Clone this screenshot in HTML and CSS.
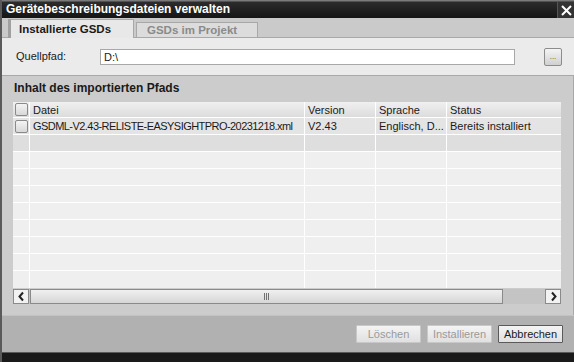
FILE: index.html
```html
<!DOCTYPE html>
<html>
<head>
  <title>Gerätebeschreibungsdateien verwalten</title>
  <link rel="stylesheet" href="styles.css">
</head>
<body>
  <div class="window">
    <div class="titlebar">
      <span class="title">Gerätebeschreibungsdateien verwalten</span>
      <span class="close">
        <svg width="13" height="13" viewBox="0 0 13 13"><path d="M2 2 L11 11 M11 2 L2 11" stroke="#fff" stroke-width="2"/></svg>
      </span>
    </div>

    <div class="tabs">
      <div class="tab active">Installierte GSDs</div>
      <div class="tab">GSDs im Projekt</div>
    </div>

    <div class="source">
      <label class="source-label">Quellpfad:</label>
      <div class="path-input">D:\</div>
      <button class="browse-btn">...</button>
    </div>

    <div class="content">
      <h2 class="section-title">Inhalt des importierten Pfads</h2>
      <div class="grid">
        <div class="row head">
          <div class="cell chk"><span class="box"></span></div>
          <div class="cell file">Datei</div>
          <div class="cell ver">Version</div>
          <div class="cell lang">Sprache</div>
          <div class="cell status">Status</div>
        </div>
        <div class="row data">
          <div class="cell chk"><span class="box"></span></div>
          <div class="cell file name">GSDML-V2.43-RELISTE-EASYSIGHTPRO-20231218.xml</div>
          <div class="cell ver">V2.43</div>
          <div class="cell lang">Englisch, D...</div>
          <div class="cell status">Bereits installiert</div>
        </div>
        <div class="row alt"><div class="cell chk"></div><div class="cell file"></div><div class="cell ver"></div><div class="cell lang"></div><div class="cell status"></div></div>
        <div class="row"><div class="cell chk"></div><div class="cell file"></div><div class="cell ver"></div><div class="cell lang"></div><div class="cell status"></div></div>
        <div class="row"><div class="cell chk"></div><div class="cell file"></div><div class="cell ver"></div><div class="cell lang"></div><div class="cell status"></div></div>
        <div class="row"><div class="cell chk"></div><div class="cell file"></div><div class="cell ver"></div><div class="cell lang"></div><div class="cell status"></div></div>
        <div class="row"><div class="cell chk"></div><div class="cell file"></div><div class="cell ver"></div><div class="cell lang"></div><div class="cell status"></div></div>
        <div class="row"><div class="cell chk"></div><div class="cell file"></div><div class="cell ver"></div><div class="cell lang"></div><div class="cell status"></div></div>
        <div class="row"><div class="cell chk"></div><div class="cell file"></div><div class="cell ver"></div><div class="cell lang"></div><div class="cell status"></div></div>
        <div class="row"><div class="cell chk"></div><div class="cell file"></div><div class="cell ver"></div><div class="cell lang"></div><div class="cell status"></div></div>
        <div class="row last"><div class="cell chk"></div><div class="cell file"></div><div class="cell ver"></div><div class="cell lang"></div><div class="cell status"></div></div>

        <!-- horizontal scrollbar -->
        <div class="hscroll">
          <span class="arrow">
            <svg width="9" height="11" viewBox="0 0 9 11"><path d="M6 1.5 L2.5 5.5 L6 9.5" stroke="#222" stroke-width="2" fill="none"/></svg>
          </span>
          <span class="thumb"><span class="grip"></span></span>
          <span class="track"></span>
          <span class="arrow">
            <svg width="9" height="11" viewBox="0 0 9 11"><path d="M3 1.5 L6.5 5.5 L3 9.5" stroke="#222" stroke-width="2" fill="none"/></svg>
          </span>
        </div>
      </div>
    </div>

    <div class="footer">
      <button class="btn disabled">Löschen</button>
      <button class="btn disabled">Installieren</button>
      <button class="btn default">Abbrechen</button>
    </div>
    <div class="bottom"></div>
  </div>
</body>
</html>
```

FILE: styles.css
```css
body {
  margin: 0;
  font-family: "Liberation Sans", Arial, sans-serif;
  font-size: 11px;
  color: #1a1a1a;
  background-color: #1a1a1a;
}

.window {
  width: 574px;
  height: 362px;
  display: flex;
  flex-direction: column;
  border-left: 2px solid #5a5a5a;
  box-sizing: border-box;
  overflow: hidden;
}

/* Title bar */
.titlebar {
  height: 18px;
  flex: none;
  display: flex;
  align-items: center;
  justify-content: space-between;
  background: linear-gradient(#7a7a7a 0, #7a7a7a 1px, #2c2c2c 2px, #151515 100%);
  padding-left: 4px;
}

.title {
  color: #ffffff;
  font-weight: bold;
  font-size: 12px;
}

.close {
  width: 16px;
  height: 16px;
  margin-top: 2px;
  display: flex;
  align-items: center;
  justify-content: center;
  background-color: #333333;
  border-left: 1px solid #555555;
}

/* Tabs */
.tabs {
  height: 19px;
  flex: none;
  display: flex;
  align-items: flex-end;
  background-color: #cacaca;
  border-bottom: 1px solid #a8a8a8;
  padding-left: 6px;
  gap: 2px;
}

.tab {
  height: 15px;
  width: 122px;
  padding-left: 10px;
  box-sizing: border-box;
  display: flex;
  align-items: center;
  font-weight: bold;
  font-size: 11.5px;
  color: #8a8a8a;
  background-color: #dcdcdc;
  border: 1px solid #a8a8a8;
  border-bottom: none;
}

.tab.active {
  width: 126px;
  height: 19px;
  margin-bottom: -1px;
  padding-left: 8px;
  color: #1a1a1a;
  background-color: #e8e8e8;
  border-left: 3px solid #a0a0a0;
}

/* Source path */
.source {
  height: 37px;
  flex: none;
  display: flex;
  align-items: center;
  background-color: #ebebeb;
  border-bottom: 1px solid #a8a8a8;
  padding-left: 14px;
}

.source-label {
  width: 84px;
  margin-top: -2px;
}

.path-input {
  width: 410px;
  height: 14px;
  padding-left: 3px;
  line-height: 14px;
  background-color: #ffffff;
  border: 1px solid #a8a8a8;
}

.browse-btn {
  width: 18px;
  height: 18px;
  margin-left: 29px;
  padding: 0;
  font-size: 8px;
  line-height: 8px;
  color: #8a4a20;
  background: linear-gradient(#f4f4f4, #d0d0d0);
  border: 1px solid #8c8c8c;
  border-radius: 2px;
}

/* Content */
.content {
  flex: 1;
  background-color: #cccccc;
  padding: 4px 11px 0 11px;
  border-right: 1px solid #a8a8a8;
}

.section-title {
  margin: 0 0 6px 1px;
  font-size: 12px;
  font-weight: bold;
  color: #1a1a1a;
  height: 16px;
  line-height: 16px;
}

.grid {
  width: 548px;
}

.row {
  display: flex;
  height: 17px;
  background-color: #efefef;
  border-bottom: 1px solid #ffffff;
  box-sizing: border-box;
}

.row.head {
  height: 16px;
  background: linear-gradient(#f0f0f0, #dcdcdc);
  border-bottom: 1px solid #ffffff;
}

.row.data {
  background-color: #e4e4e4;
}

.row.alt {
  background-color: #dedede;
}

.row.last {
  border-bottom: none;
}

.cell {
  display: flex;
  align-items: center;
  padding-left: 3px;
  box-sizing: border-box;
  border-right: 1px solid #ffffff;
  white-space: nowrap;
  overflow: hidden;
}

.cell.name {
  letter-spacing: -0.55px;
}

.cell.chk {
  width: 17px;
  padding-left: 2px;
}

.cell.file {
  width: 275px;
}

.cell.ver {
  width: 71px;
}

.cell.lang {
  width: 71px;
}

.cell.status {
  flex: 1;
  border-right: none;
}

.box {
  width: 11px;
  height: 11px;
  border: 1px solid #8a8a8a;
  border-radius: 2px;
  background: linear-gradient(#f4f4f4, #d8d8d8);
}

/* Scrollbar */
.hscroll {
  display: flex;
  height: 15px;
  margin-top: 1px;
  background-color: #c4c4c4;
}

.arrow {
  width: 14px;
  height: 13px;
  display: flex;
  align-items: center;
  justify-content: center;
  background-color: #f2f2f2;
  border: 1px solid #8a8a8a;
}

.thumb {
  width: 471px;
  height: 13px;
  margin-left: 1px;
  display: flex;
  align-items: center;
  justify-content: center;
  background: linear-gradient(#f0f0f0, #d6d6d6);
  border: 1px solid #8a8a8a;
}

.grip {
  width: 5px;
  height: 7px;
  background: repeating-linear-gradient(90deg, #707070 0, #707070 1px, transparent 1px, transparent 2px);
}

.track {
  flex: 1;
}

/* Footer */
.footer {
  height: 37px;
  flex: none;
  display: flex;
  align-items: center;
  justify-content: flex-end;
  gap: 6px;
  background-color: #b1b1b1;
  border-top: 1px solid #c2c2c2;
  padding-right: 11px;
  box-sizing: border-box;
}

.btn {
  width: 65px;
  height: 18px;
  padding: 0;
  font-family: "Liberation Sans", Arial, sans-serif;
  font-size: 11px;
  color: #1a1a1a;
  background: linear-gradient(#f4f4f4, #e0e0e0);
  border: 1px solid #9a9a9a;
  border-radius: 1px;
}

.btn.disabled {
  color: #9a9a9a;
  border-color: #c8c8c8;
}

.btn.default {
  border-color: #5a5a5a;
}

.bottom {
  height: 10px;
  flex: none;
  box-sizing: border-box;
  background-color: #1a1a1a;
  border-top: 1px solid #5a5a5a;
}
```
